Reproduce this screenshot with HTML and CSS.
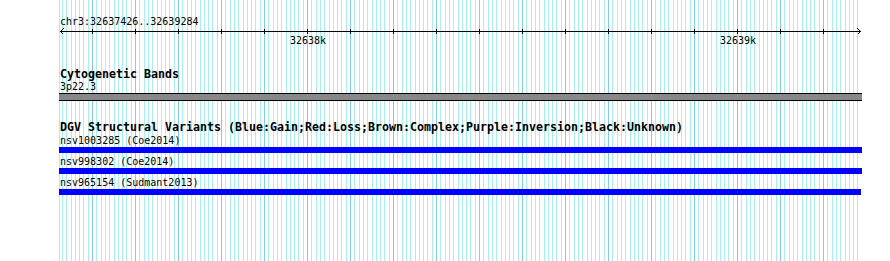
FILE: index.html
```html
<!DOCTYPE html>
<html lang="en">

<head>
    <meta charset="UTF-8">
    <title>chr3:32637426..32639284</title>
    <link rel="stylesheet" href="styles.css">
</head>

<body>
    <div class="canvas">
        <div class="position">chr3:32637426..32639284</div>
        <svg class="ruler" width="803" height="18" viewBox="0 0 803 18">
            <line class="axis" x1="1" y1="3.5" x2="802" y2="3.5" />
            <polyline class="axis" points="4.5,0.5 1.5,3.5 4.5,6.5" />
            <polyline class="axis" points="798.5,0.5 801.5,3.5 798.5,6.5" />
            <g class="ticks">
                <line x1="33.5" y1="1" x2="33.5" y2="6" />
                <line x1="76.5" y1="1" x2="76.5" y2="6" />
                <line x1="119.5" y1="1" x2="119.5" y2="6" />
                <line x1="162.5" y1="1" x2="162.5" y2="6" />
                <line x1="205.5" y1="1" x2="205.5" y2="6" />
                <line x1="248.5" y1="1" x2="248.5" y2="6" />
                <line x1="291.5" y1="1" x2="291.5" y2="6" />
                <line x1="334.5" y1="1" x2="334.5" y2="6" />
                <line x1="377.5" y1="1" x2="377.5" y2="6" />
                <line x1="420.5" y1="1" x2="420.5" y2="6" />
                <line x1="463.5" y1="1" x2="463.5" y2="6" />
                <line x1="506.5" y1="1" x2="506.5" y2="6" />
                <line x1="549.5" y1="1" x2="549.5" y2="6" />
                <line x1="592.5" y1="1" x2="592.5" y2="6" />
                <line x1="635.5" y1="1" x2="635.5" y2="6" />
                <line x1="678.5" y1="1" x2="678.5" y2="6" />
                <line x1="721.5" y1="1" x2="721.5" y2="6" />
                <line x1="764.5" y1="1" x2="764.5" y2="6" />
            </g>
            <text class="tick-label" x="249" y="16">32638k</text>
            <text class="tick-label" x="679" y="16">32639k</text>
        </svg>

        <div class="track cyto">
            <div class="track-title">Cytogenetic Bands</div>
            <div class="item-label band-label">3p22.3</div>
            <div class="band"></div>
        </div>

        <div class="track dgv">
            <div class="track-title">DGV Structural Variants (Blue:Gain;Red:Loss;Brown:Complex;Purple:Inversion;Black:Unknown)</div>
            <div class="item">
                <div class="item-label">nsv1003285 (Coe2014)</div>
                <div class="bar gain"></div>
            </div>
            <div class="item">
                <div class="item-label">nsv998302 (Coe2014)</div>
                <div class="bar gain"></div>
            </div>
            <div class="item">
                <div class="item-label">nsv965154 (Sudmant2013)</div>
                <div class="bar gain short"></div>
            </div>
        </div>
    </div>
</body>

</html>
```

FILE: styles.css
```css
body {
    margin: 0;
    background-color: #fff;
    font-family: "DejaVu Sans Mono", monospace;
    color: #000;
}

/* Browser image: guidelines every 10bp, darker every 100bp */
.canvas {
    margin-left: 59px;
    width: 799px;
    height: 261px;
    background-color: #fff;
    background-image:
        linear-gradient(to right, #aaeeee 0 1px, transparent 1px),
        linear-gradient(to right,
            #88c8ee 0 1px, transparent 1px 4px,
            #aaeeee 4px 5px, transparent 5px 9px,
            #aaeeee 9px 10px, transparent 10px 13px,
            #aaeeee 13px 14px, transparent 14px 17px,
            #aaeeee 17px 18px, transparent 18px 22px,
            #aaeeee 22px 23px, transparent 23px 26px,
            #aaeeee 26px 27px, transparent 27px 30px,
            #aaeeee 30px 31px, transparent 31px 34px,
            #aaeeee 34px 35px, transparent 35px 39px,
            #aaeeee 39px 40px, transparent 40px);
    background-size: 1px 100%, 43px 100%;
    background-position: 0 0, 33px 0;
    background-repeat: no-repeat, repeat-x;
}

.position {
    padding-top: 16px;
    padding-left: 1px;
    font-size: 10px;
    line-height: 12px;
}

.ruler {
    display: block;
    overflow: visible;
}

.ruler .axis,
.ruler .ticks line {
    stroke: #000;
    stroke-width: 1;
    fill: none;
    shape-rendering: crispEdges;
}

.tick-label {
    font-family: "DejaVu Sans Mono", monospace;
    font-size: 10px;
    text-anchor: middle;
    fill: #000;
}

.track-title {
    padding-left: 1px;
    font-size: 11.63px;
    font-weight: bold;
    line-height: 13px;
    white-space: nowrap;
}

.item-label {
    padding-left: 1px;
    font-size: 10px;
    line-height: 13px;
    white-space: nowrap;
}

.cyto {
    margin-top: 22px;
}

.cyto .band-label {
    line-height: 12px;
}

.band {
    width: 803px;
    height: 6px;
    background-color: #888;
    border-top: 1px solid #000;
    border-bottom: 1px solid #000;
}

.dgv {
    margin-top: 20px;
}

.item {
    margin-bottom: 2px;
}

.bar {
    width: 803px;
    height: 6px;
}

.bar.short {
    width: 802px;
}

.gain {
    background-color: #0000ff;
}
```
